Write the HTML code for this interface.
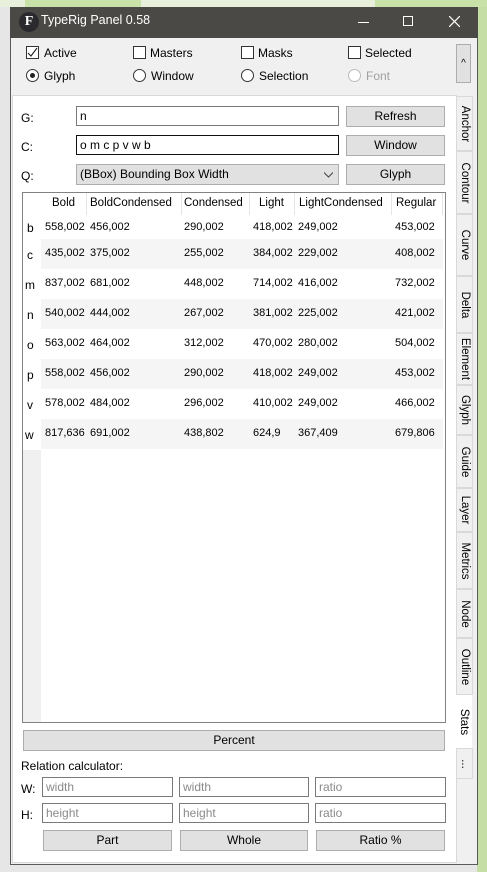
<!DOCTYPE html>
<html><head><style>
*{box-sizing:border-box;margin:0;padding:0}
body{width:487px;height:872px;position:relative;overflow:hidden;background:#e6e6e6;font-family:"Liberation Sans",sans-serif;font-size:12px;color:#000}
.a{position:absolute}
.tab{position:absolute;left:457px;width:16px;background:#f0f0f0;border:1px solid #d9d9d9;border-left:none}
.tab span{position:absolute;left:50%;top:50%;transform:translate(-50%,-50%) rotate(90deg);white-space:nowrap;font-size:11.5px}
.btn{position:absolute;background:#e1e1e1;border:1px solid #adadad;text-align:center;line-height:18px}
.inp{position:absolute;background:#fff;border:1px solid #7a7a7a;padding-left:3px;line-height:18px}
.ph{color:#8a8a8a}
.cb{position:absolute;width:13px;height:13px;border:1px solid #333;background:#fff}
.rb{position:absolute;width:13px;height:13px;border:1px solid #333;border-radius:50%;background:#fff}
.row{position:absolute;left:41px;width:402px;height:30px;font-size:11px}
.row span{position:absolute;top:8px}
.rh{position:absolute;left:27px}
.hd{font-size:11.5px}
</style></head><body>
<div class="a" style="left:0;top:0;width:487px;height:7px;background:#e8f0dc"></div>
<div class="a" style="left:25px;top:0;width:116px;height:7px;background:#c9e2a8"></div>
<div class="a" style="left:375px;top:0;width:112px;height:7px;background:#c9e2a8"></div>
<div class="a" style="left:477px;top:7px;width:10px;height:865px;background:#c5dea5"></div>
<div class="a" style="left:10px;top:7px;width:468px;height:858px;background:#f0f0f0;border:1px solid #5a5a5a"></div>
<div class="a" style="left:10px;top:7px;width:468px;height:31px;background:#4b4946"></div>
<div class="a" style="left:19px;top:12px;width:20px;height:20px;border-radius:50%;background:#2a2a2e;color:#fff;font:bold 14px 'Liberation Serif',serif;text-align:center;line-height:20px">F</div>
<div class="a" style="left:41px;top:13px;color:#fff;font-size:12.5px">TypeRig Panel 0.58</div>
<div class="a" style="left:358px;top:22px;width:11px;height:1px;background:#fff"></div>
<div class="a" style="left:403px;top:16px;width:10px;height:10px;border:1px solid #fff"></div>
<svg class="a" style="left:449px;top:16px" width="11" height="11"><path d="M0 0L11 11M11 0L0 11" stroke="#fff" stroke-width="1.2"/></svg>
<div class="cb" style="left:26px;top:46px"><svg width="11" height="11" style="position:absolute;left:0;top:0"><path d="M1 6L4 9L10 1" stroke="#222" fill="none" stroke-width="1.1"/></svg></div>
<div class="a" style="left:44px;top:46px">Active</div>
<div class="cb" style="left:133px;top:46px"></div><div class="a" style="left:150px;top:46px">Masters</div>
<div class="cb" style="left:241px;top:46px"></div><div class="a" style="left:258px;top:46px">Masks</div>
<div class="cb" style="left:348px;top:46px"></div><div class="a" style="left:365px;top:46px">Selected</div>
<div class="rb" style="left:26px;top:69px"><div class="a" style="left:3px;top:3px;width:5px;height:5px;border-radius:50%;background:#222"></div></div>
<div class="a" style="left:44px;top:69px">Glyph</div>
<div class="rb" style="left:133px;top:69px"></div><div class="a" style="left:151px;top:69px">Window</div>
<div class="rb" style="left:241px;top:69px"></div><div class="a" style="left:259px;top:69px">Selection</div>
<div class="rb" style="left:348px;top:69px;border-color:#bbb"></div><div class="a" style="left:366px;top:69px;color:#a0a0a0">Font</div>
<div class="btn" style="left:456px;top:44px;width:15px;height:39px;line-height:37px;font-size:10px">^</div>
<div class="a" style="left:12px;top:95px;width:445px;height:768px;background:#fff;border:1px solid #d9d9d9"></div>
<div class="a" style="left:21px;top:111px">G:</div>
<div class="inp" style="left:76px;top:106px;width:263px;height:20px">n</div>
<div class="btn" style="left:346px;top:106px;width:99px;height:21px">Refresh</div>
<div class="a" style="left:21px;top:140px">C:</div>
<div class="inp" style="left:76px;top:135px;width:263px;height:20px;border-color:#111">o m c p v w b</div>
<div class="btn" style="left:346px;top:135px;width:99px;height:21px">Window</div>
<div class="a" style="left:21px;top:169px">Q:</div>
<div class="btn" style="left:76px;top:164px;width:263px;height:21px;text-align:left;padding-left:3px">(BBox) Bounding Box Width</div>
<svg class="a" style="left:324px;top:172px" width="9" height="6"><path d="M0 0.5L4.5 5L9 0.5" stroke="#444" fill="none"/></svg>
<div class="btn" style="left:346px;top:164px;width:99px;height:21px">Glyph</div>
<div class="a" style="left:22px;top:192px;width:424px;height:531px;background:#fff;border:1px solid #828282"></div>
<div class="a" style="left:23px;top:450px;width:18px;height:272px;background:#f0f0f0"></div>
<div class="a hd" style="left:41px;top:193px;width:402px;height:22px">
<span class="a" style="left:11px;top:4px">Bold</span>
<span class="a" style="left:45px;top:0;width:1px;height:22px;background:#e5e5e5"></span>
<span class="a" style="left:49px;top:4px">BoldCondensed</span>
<span class="a" style="left:140px;top:0;width:1px;height:22px;background:#e5e5e5"></span>
<span class="a" style="left:143px;top:4px">Condensed</span>
<span class="a" style="left:208px;top:0;width:1px;height:22px;background:#e5e5e5"></span>
<span class="a" style="left:218px;top:4px">Light</span>
<span class="a" style="left:253px;top:0;width:1px;height:22px;background:#e5e5e5"></span>
<span class="a" style="left:258px;top:4px">LightCondensed</span>
<span class="a" style="left:350px;top:0;width:1px;height:22px;background:#e5e5e5"></span>
<span class="a" style="left:355px;top:4px">Regular</span>
<span class="a" style="left:401px;top:0;width:1px;height:22px;background:#e5e5e5"></span>
</div>
<div class="row" style="top:213px"><span style="left:4px">558,002</span><span style="left:49px">456,002</span><span style="left:143px">290,002</span><span style="left:212px">418,002</span><span style="left:257px">249,002</span><span style="left:354px">453,002</span></div>
<div class="row" style="top:239px;background:#f5f5f5"><span style="left:4px">435,002</span><span style="left:49px">375,002</span><span style="left:143px">255,002</span><span style="left:212px">384,002</span><span style="left:257px">229,002</span><span style="left:354px">408,002</span></div>
<div class="row" style="top:269px"><span style="left:4px">837,002</span><span style="left:49px">681,002</span><span style="left:143px">448,002</span><span style="left:212px">714,002</span><span style="left:257px">416,002</span><span style="left:354px">732,002</span></div>
<div class="row" style="top:299px;background:#f5f5f5"><span style="left:4px">540,002</span><span style="left:49px">444,002</span><span style="left:143px">267,002</span><span style="left:212px">381,002</span><span style="left:257px">225,002</span><span style="left:354px">421,002</span></div>
<div class="row" style="top:329px"><span style="left:4px">563,002</span><span style="left:49px">464,002</span><span style="left:143px">312,002</span><span style="left:212px">470,002</span><span style="left:257px">280,002</span><span style="left:354px">504,002</span></div>
<div class="row" style="top:359px;background:#f5f5f5"><span style="left:4px">558,002</span><span style="left:49px">456,002</span><span style="left:143px">290,002</span><span style="left:212px">418,002</span><span style="left:257px">249,002</span><span style="left:354px">453,002</span></div>
<div class="row" style="top:389px"><span style="left:4px">578,002</span><span style="left:49px">484,002</span><span style="left:143px">296,002</span><span style="left:212px">410,002</span><span style="left:257px">249,002</span><span style="left:354px">466,002</span></div>
<div class="row" style="top:419px;background:#f5f5f5"><span style="left:4px">817,636</span><span style="left:49px">691,002</span><span style="left:143px">438,802</span><span style="left:212px">624,9</span><span style="left:257px">367,409</span><span style="left:354px">679,806</span></div>
<div class="rh" style="top:221px">b</div><div class="rh" style="top:248px">c</div><div class="rh" style="top:278px;left:25px">m</div><div class="rh" style="top:308px">n</div><div class="rh" style="top:338px">o</div><div class="rh" style="top:368px">p</div><div class="rh" style="top:398px">v</div><div class="rh" style="top:428px;left:25px">w</div>
<div class="btn" style="left:23px;top:730px;width:422px;height:21px">Percent</div>
<div class="a" style="left:21px;top:759px">Relation calculator:</div>
<div class="a" style="left:21px;top:782px">W:</div>
<div class="inp ph" style="left:42px;top:777px;width:131px;height:20px">width</div>
<div class="inp ph" style="left:179px;top:777px;width:130px;height:20px">width</div>
<div class="inp ph" style="left:315px;top:777px;width:131px;height:20px">ratio</div>
<div class="a" style="left:21px;top:808px">H:</div>
<div class="inp ph" style="left:42px;top:803px;width:131px;height:20px">height</div>
<div class="inp ph" style="left:179px;top:803px;width:130px;height:20px">height</div>
<div class="inp ph" style="left:315px;top:803px;width:131px;height:20px">ratio</div>
<div class="btn" style="left:43px;top:830px;width:129px;height:21px">Part</div>
<div class="btn" style="left:180px;top:830px;width:128px;height:21px">Whole</div>
<div class="btn" style="left:316px;top:830px;width:129px;height:21px">Ratio %</div>
<div class="tab" style="top:96px;height:55px"><span>Anchor</span></div>
<div class="tab" style="top:151px;height:63px"><span>Contour</span></div>
<div class="tab" style="top:214px;height:62px"><span>Curve</span></div>
<div class="tab" style="top:276px;height:57px"><span>Delta</span></div>
<div class="tab" style="top:333px;height:52px"><span>Element</span></div>
<div class="tab" style="top:385px;height:50px"><span>Glyph</span></div>
<div class="tab" style="top:435px;height:53px"><span>Guide</span></div>
<div class="tab" style="top:488px;height:44px"><span>Layer</span></div>
<div class="tab" style="top:532px;height:57px"><span>Metrics</span></div>
<div class="tab" style="top:589px;height:49px"><span>Node</span></div>
<div class="tab" style="top:638px;height:57px"><span>Outline</span></div>
<div class="tab" style="top:695px;height:53px;background:#fff;border-color:#fff;left:456px"><span>Stats</span></div>
<div class="tab" style="top:748px;height:31px"><span>...</span></div>
</body></html>
